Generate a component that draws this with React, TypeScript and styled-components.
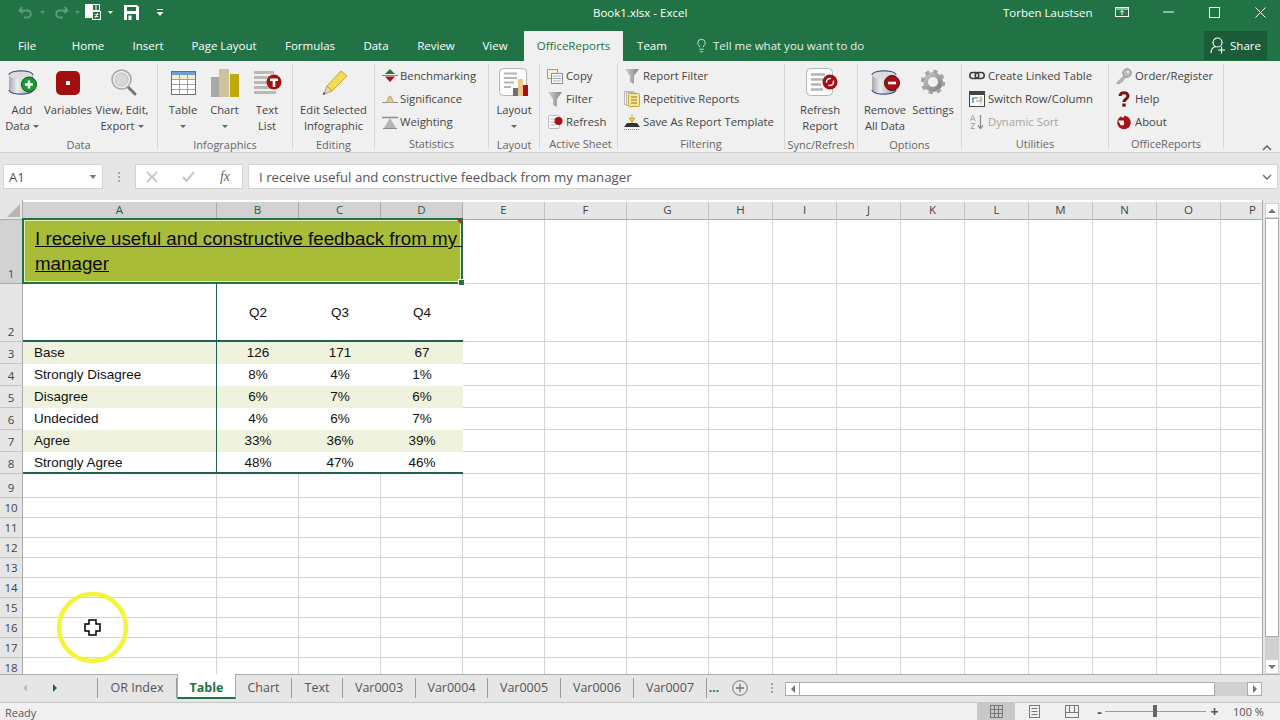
import React from 'react';
import styled, { createGlobalStyle } from 'styled-components';
import { Lightbulb } from 'lucide-react';

const UI = '"Open Sans", "Noto Sans", sans-serif';
const GREEN = '#217346';
const LINE = '#1f6150';

const Global = createGlobalStyle`
  html, body { margin: 0; padding: 0; overflow: hidden; background: #fff; }
  #root { width: 1280px; height: 720px; }
  * { box-sizing: border-box; }
`;

const Page = styled.div`
  position: relative; width: 1280px; height: 720px; overflow: hidden;
  display: flex; flex-direction: column;
  font-family: ${UI}; font-size: 11.5px; color: #444; background: #f0f0f0;
`;

/* ---------- title bar ---------- */
const TitleBar = styled.div`
  height: 31px; background: ${GREEN}; color: #fff; display: flex; align-items: center; flex: none; padding-bottom: 7px;
`;
const QuickAccess = styled.div`
  width: 593px; flex: none; display: flex; align-items: center; padding-left: 18px;
`;
const QaGap = styled.span<{ $w: number }>` width: ${p => p.$w}px; flex: none; `;
const DocTitle = styled.div` width: 410px; flex: none; font-size: 11.5px; `;
const UserName = styled.div` width: 100px; flex: none; font-size: 11.5px; `;
const WinButton = styled.div<{ $w: number; $pr?: number }>`
  width: ${p => p.$w}px; flex: none; display: flex; justify-content: center; padding-right: ${p => p.$pr ?? 0}px;
`;

/* ---------- tabs ---------- */
const TabRow = styled.div`
  height: 30px; background: ${GREEN}; display: flex; align-items: stretch; flex: none; color: #fff;
`;
const RibbonTab = styled.div<{ $w: number; $active?: boolean }>`
  width: ${p => p.$w}px; flex: none; display: flex; align-items: center; justify-content: center;
  font-size: 11.5px; padding-bottom: 2px;
  background: ${p => (p.$active ? '#f0f0f0' : 'transparent')};
  color: ${p => (p.$active ? GREEN : '#fff')};
`;
const TellMe = styled.div`
  margin-left: 13px; width: 510px; flex: none; display: flex; align-items: center; gap: 4px; padding-bottom: 2px;
  font-size: 11.5px; color: #e4efe8;
`;
const ShareButton = styled.div`
  width: 63px; height: 29px; flex: none; background: #1a5c38; display: flex; align-items: center;
  justify-content: center; gap: 3px; font-size: 11.5px;
`;

/* ---------- ribbon ---------- */
const Ribbon = styled.div`
  position: relative; height: 92px; flex: none; background: #f0f0f0;
  border-bottom: 1px solid #d4d4d4; display: flex; align-items: flex-start;
`;
const Group = styled.div<{ $w: number }>`
  width: ${p => p.$w}px; height: 85px; margin-top: 3px; flex: none;
  border-right: 1px solid #d6d6d6; display: flex; flex-direction: column;
`;
const GroupBody = styled.div<{ $pad?: number }>`
  height: 70px; display: flex; padding-left: ${p => p.$pad ?? 0}px;
`;
const GroupLabel = styled.div<{ $shift?: number }>`
  height: 16px; margin-top: 3px; line-height: 16px; text-align: center; font-size: 11px; color: #666;
  white-space: nowrap; padding-left: ${p => p.$shift ?? 0}px;
`;
const LargeButton = styled.div<{ $w: number }>`
  width: ${p => p.$w}px; flex: none; display: flex; flex-direction: column; align-items: center;
`;
const IconSlot = styled.div`
  height: 38px; padding-top: 3px; display: flex; justify-content: center; flex: none;
`;
const BtnLine = styled.div`
  height: 16px; line-height: 16px; white-space: nowrap; font-size: 11.2px; color: #444;
  display: flex; align-items: center; justify-content: center; gap: 3px;
`;
const Caret = styled.span`
  display: inline-block; width: 0; height: 0; border-left: 3px solid transparent;
  border-right: 3px solid transparent; border-top: 3px solid #666; margin-top: 1px;
`;
const SmallColumn = styled.div`
  display: flex; flex-direction: column;
`;
const SmallRow = styled.div<{ $gap: number; $off?: boolean }>`
  height: 23px; display: flex; align-items: center; gap: ${p => p.$gap}px; white-space: nowrap;
  color: ${p => (p.$off ? '#a6a6a6' : '#444')}; font-size: 11.3px;
`;
const Collapse = styled.div`
  position: absolute; right: 6px; bottom: 3px; width: 12px; height: 10px;
`;

/* ---------- formula bar ---------- */
const FormulaBar = styled.div`
  height: 47px; flex: none; background: #e6e6e6; padding: 11px 2px 11px 3px; display: flex; align-items: stretch;
`;
const NameBox = styled.div`
  width: 100px; background: #fff; border: 1px solid #d4d4d4; display: flex; align-items: center;
  justify-content: space-between; padding: 0 5px 0 5px; font-size: 13px; color: #555;
`;
const Dots = styled.div`
  width: 32px; display: flex; flex-direction: column; gap: 2px; align-items: center; justify-content: center;
  & > i { width: 2px; height: 2px; background: #aaa; display: block; }
`;
const FxBox = styled.div`
  width: 108px; background: #fff; border: 1px solid #d4d4d4; display: flex; align-items: center;
  justify-content: space-between; padding: 0 12px 0 10px;
`;
const FxGlyph = styled.span`
  font-family: "Liberation Serif", serif; font-style: italic; font-size: 14px; color: #666;
`;
const FormulaInput = styled.div`
  flex: 1; margin-left: 5px; background: #fff; border: 1px solid #d4d4d4; display: flex; align-items: center;
  justify-content: space-between; padding: 0 5px 0 10px; font-size: 13.25px; color: #555;
`;

/* ---------- sheet ---------- */
const SheetRow = styled.div`
  height: 474px; flex: none; display: flex; background: #e6e6e6;
`;
const Grid = styled.div`
  width: 1263px; height: 474px; overflow: hidden; background: #fff; border-right: 1px solid #ababab;
  display: grid;
  grid-template-columns: 23px 194px 82px 82px 82px 82px 82px 82px repeat(8, 64px) 64px;
  grid-template-rows: 20px 64px 58px repeat(6, 22px) 24px repeat(9, 20px);
  font-family: "Liberation Sans", Arial, sans-serif; font-size: 13.5px; color: #111;
`;
const Corner = styled.div`
  background: #e6e6e6; border-right: 1px solid #ababab; border-bottom: 1px solid #ababab; position: relative;
  &::after {
    content: ''; position: absolute; right: 2px; bottom: 2px; width: 0; height: 0;
    border-left: 13px solid transparent; border-bottom: 13px solid #b4b4b4;
  }
`;
const ColHead = styled.div<{ $sel?: boolean }>`
  background: ${p => (p.$sel ? '#d2d2d2' : '#e6e6e6')};
  margin-top: 2px; padding-bottom: 3px;
  border-right: 1px solid ${p => (p.$sel ? '#ababab' : '#c4c4c4')};
  border-bottom: 1px solid ${p => (p.$sel ? GREEN : '#ababab')};
  color: ${p => (p.$sel ? '#22604a' : '#444')};
  font-family: ${UI}; font-size: 11.5px; display: flex; align-items: center; justify-content: center;
`;
const RowHead = styled.div<{ $sel?: boolean }>`
  background: ${p => (p.$sel ? '#d2d2d2' : '#e6e6e6')};
  border-right: 1px solid ${p => (p.$sel ? GREEN : '#ababab')};
  border-bottom: 1px solid ${p => (p.$sel ? '#ababab' : '#c4c4c4')};
  color: ${p => (p.$sel ? '#22604a' : '#444')};
  font-family: ${UI}; font-size: 11.5px; line-height: 14px; display: flex; align-items: flex-end; justify-content: center;
  padding-bottom: 2px;
`;
const Cell = styled.div`
  border-right: 1px solid #d4d4d4; border-bottom: 1px solid #d4d4d4;
`;
const TableCell = styled.div<{ $fill?: boolean; $divider?: boolean; $rule?: boolean; $left?: boolean }>`
  background: ${p => (p.$fill ? '#eff3dd' : '#fff')};
  border-right: ${p => (p.$divider ? `1px solid ${LINE}` : '0')};
  border-bottom: ${p => (p.$rule ? `2px solid ${LINE}` : '0')};
  display: flex; align-items: center;
  justify-content: ${p => (p.$left ? 'flex-start' : 'center')};
  padding-left: ${p => (p.$left ? '11px' : '0')};
  padding-bottom: ${p => (p.$rule ? '0' : '2px')};
  white-space: nowrap;
`;
const Merged = styled.div`
  grid-column: span 4; position: relative; z-index: 2;
  margin: -2px 0 0 -1px;
  background: #a9bc37; border: 2px solid ${GREEN}; box-shadow: inset 0 0 0 1px #e6edc4;
  padding: 6px 0 0 11px; font-size: 18.75px; line-height: 25px; color: #0a0a0a;
  text-decoration: underline; white-space: pre-wrap;
`;
const Handle = styled.i`
  position: absolute; right: -4px; bottom: -4px; width: 7px; height: 7px; background: ${GREEN};
  border: 1px solid #fff;
`;
const CommentMark = styled.i`
  position: absolute; right: 0; top: 0; width: 0; height: 0;
  border-left: 4px solid transparent; border-top: 4px solid #a33;
`;

/* vertical scroll */
const VScroll = styled.div`
  width: 17px; height: 474px; padding: 3px 0 0 2px; display: flex; flex-direction: column;
`;
const ScrollBtn = styled.div`
  height: 15px; width: 14px; background: #fff; border: 1px solid #d4d4d4; display: flex; align-items: center; justify-content: center; flex: none;
`;
const VThumb = styled.div`
  height: 419px; width: 14px; background: #fff; border: 1px solid #ababab; flex: none;
`;
const VTrack = styled.div` flex: 1; width: 14px; background: #d0d0d0; `;
const ArrowUp = styled.i`
  width: 0; height: 0; border-left: 4px solid transparent; border-right: 4px solid transparent; border-bottom: 4px solid #777;
`;
const ArrowDown = styled.i`
  width: 0; height: 0; border-left: 4px solid transparent; border-right: 4px solid transparent; border-top: 4px solid #777;
`;
const ArrowSide = styled.i<{ $dir: 'l' | 'r'; $c?: string }>`
  width: 0; height: 0; border-top: 4px solid transparent; border-bottom: 4px solid transparent;
  ${p => (p.$dir === 'l' ? `border-right: 4px solid ${p.$c ?? '#777'};` : `border-left: 4px solid ${p.$c ?? '#777'};`)}
`;

/* ---------- sheet tabs ---------- */
const TabBar = styled.div`
  height: 28px; flex: none; background: #e6e6e6; border-top: 1px solid #ababab; display: flex; align-items: flex-start;
`;
const TabNav = styled.div`
  width: 98px; height: 20px; margin-top: 3px; border-right: 1px solid #9c9c9c; display: flex; align-items: center;
  padding-left: 23px; gap: 26px; flex: none;
`;
const SheetTab = styled.div<{ $w: number; $active?: boolean }>`
  width: ${p => p.$w}px; font-size: 12.5px; display: flex; align-items: center; justify-content: center; flex: none;
  ${p => p.$active
    ? `height: 25px; margin-top: -1px; background: #fff; color: ${GREEN}; font-weight: 700;
       border-left: 1px solid #ababab; border-right: 1px solid #ababab; border-bottom: 2px solid ${GREEN}; padding-top: 3px;`
    : `height: 20px; margin-top: 3px; color: #555; border-right: 1px solid #9c9c9c; padding-bottom: 2px;`}
`;
const More = styled.div`
  width: 14px; flex: none; height: 20px; margin-top: 3px; color: ${GREEN}; font-weight: 700; font-size: 12px; line-height: 20px; text-align: center;
`;
const AddSheet = styled.div`
  width: 38px; flex: none; height: 20px; margin-top: 3px; display: flex; justify-content: center; align-items: center;
`;
const TabDots = styled(Dots)`
  width: 26px; flex: none; height: 20px; margin-top: 3px;
`;
const HScroll = styled.div`
  width: 477px; flex: none; height: 14px; margin-top: 7px; display: flex;
`;
const HBtn = styled.div`
  width: 15px; background: #fff; border: 1px solid #ababab; display: flex; align-items: center; justify-content: center; flex: none;
`;
const HThumb = styled.div`
  width: 416px; background: #fff; border: 1px solid #ababab; flex: none; margin-left: -1px;
`;
const HTrack = styled.div` flex: 1; background: #d0d0d0; `;

/* ---------- status bar ---------- */
const StatusBar = styled.div`
  height: 18px; flex: none; background: #f0f0f0; border-top: 1px solid #c6c6c6; display: flex; align-items: stretch;
  font-size: 11px; color: #555;
`;
const Ready = styled.div` width: 977px; flex: none; padding-left: 5px; line-height: 20px; `;
const ViewBtn = styled.div<{ $on?: boolean }>`
  width: 38px; flex: none; display: flex; align-items: center; justify-content: center; background: ${p => (p.$on ? '#c8c8c8' : 'transparent')};
`;
const ZoomWrap = styled.div`
  width: 189px; flex: none; display: flex; align-items: center; padding-left: 4px;
`;
const ZoomSign = styled.span`
  width: 9px; font-size: 14px; font-weight: 700; line-height: 14px; text-align: center; color: #555; flex: none;
`;
const Slider = styled.div`
  position: relative; width: 101px; height: 1px; background: #9c9c9c; margin: 0 4px 0 1px; flex: none;
`;
const SliderThumb = styled.i`
  position: absolute; left: 48px; top: -6px; width: 4px; height: 12px; background: #666;
`;
const ZoomText = styled.div` width: 59px; flex: none; text-align: center; line-height: 18px; white-space: nowrap; `;

/* ---------- presenter cursor overlay ---------- */
const Highlight = styled.svg`
  position: absolute; left: 52px; top: 587px; pointer-events: none; z-index: 5;
`;

/* ---------- icons ---------- */
const Svg32: React.FC<{ children: React.ReactNode }> = ({ children }) => (
  <svg width="32" height="32" viewBox="0 0 32 32" style={{ overflow: 'visible' }}>{children}</svg>
);
const Svg16: React.FC<{ children: React.ReactNode }> = ({ children }) => (
  <svg width="16" height="16" viewBox="0 0 16 16" style={{ flex: 'none', overflow: 'visible' }}>{children}</svg>
);

const Defs = () => (
  <svg width="0" height="0" style={{ position: 'absolute' }}>
    <defs>
      <linearGradient id="cyl" x1="0" x2="1" y1="0" y2="0">
        <stop offset="0" stopColor="#a8a8ac" /><stop offset=".35" stopColor="#eeeeee" /><stop offset="1" stopColor="#8f8f94" />
      </linearGradient>
      <linearGradient id="fun" x1="0" x2="1" y1="0" y2="0">
        <stop offset="0" stopColor="#d0d0d0" /><stop offset="1" stopColor="#848484" />
      </linearGradient>
      <linearGradient id="gear" x1="0" x2="1" y1="0" y2="1">
        <stop offset="0" stopColor="#c4c4c4" /><stop offset="1" stopColor="#808080" />
      </linearGradient>
    </defs>
  </svg>
);

const Cylinder: React.FC<{ children?: React.ReactNode }> = ({ children }) => (
  <Svg32>
    <path d="M3 8v15c0 5.500 24 5.500 24 0V8z" fill="url(#cyl)" />
    <ellipse cx="15" cy="8" rx="12" ry="4.200" fill="#dcdcdc" />
    <path d="M3 8c0-5.500 24-5.500 24 0" fill="none" stroke="#1c2c86" strokeWidth="1" />
    <path d="M3 23c0 5.500 24 5.500 24 0" fill="none" stroke="#1c2c86" strokeWidth="1" />
    {children}
  </Svg32>
);
const AddDataIcon = () => (
  <Cylinder>
    <circle cx="23" cy="17.500" r="7.500" fill="#1a9a2e" stroke="#0a5a1c" />
    <path d="M23 13.500v8M19 17.500h8" stroke="#fff" strokeWidth="2.400" />
  </Cylinder>
);
const RemoveIcon = () => (
  <Cylinder>
    <circle cx="23" cy="16" r="7.500" fill="#a80f14" stroke="#5a0a0a" />
    <path d="M19 16h8" stroke="#fff" strokeWidth="2.600" />
  </Cylinder>
);
const VariablesIcon = () => (
  <Svg32>
    <rect x="4" y="4" width="24" height="24" rx="5" fill="#a30d0d" />
    <rect x="14" y="14" width="4" height="4" fill="#fff" />
  </Svg32>
);
const MagnifierIcon = () => (
  <Svg32>
    <path d="M21 19l8 8" stroke="#777" strokeWidth="3" strokeLinecap="round" />
    <circle cx="15.500" cy="12.500" r="9.500" fill="#ececec" stroke="#a6a6a6" strokeWidth="1.500" />
    <circle cx="15.500" cy="12.500" r="6.500" fill="#d8d8d8" stroke="#c4c4c4" />
  </Svg32>
);
const TableIcon = () => (
  <Svg32>
    <rect x="4.500" y="4.500" width="24" height="23" fill="#fff" stroke="#6e6e6e" />
    <rect x="5" y="5" width="23" height="3" fill="#6f9fd2" />
    <rect x="5" y="8" width="23" height="4" fill="#f4eccb" />
    <path d="M5 12.500h23M5 17.500h23M5 22.500h23M12.500 8v19M20.500 8v19" stroke="#9aa4ae" strokeWidth="1" />
  </Svg32>
);
const ChartIcon = () => (
  <Svg32>
    <rect x="2" y="10" width="8" height="20" fill="#a8a8a8" />
    <rect x="10" y="2" width="10" height="28" fill="#cfc39b" />
    <rect x="21" y="7" width="9" height="23" fill="#bcab0a" />
  </Svg32>
);
const TextListIcon = () => (
  <Svg32>
    <path d="M3 5.500h20M3 10.500h16M3 15.500h14M3 20.500h18M3 25.500h22" stroke="#b9b9b9" strokeWidth="3" />
    <circle cx="23" cy="15" r="7.500" fill="#a50f0f" />
    <path d="M19 11.500h8v2.500h-2.700v6h-2.600v-6H19z" fill="#fff" />
  </Svg32>
);
const PencilIcon = () => (
  <Svg32>
    <path d="M9 19L23 4l6 5-15 15z" fill="#f4dc52" stroke="#c9a83a" />
    <path d="M9 19l5 5-8 3z" fill="#e8d9b0" stroke="#a59a7c" />
    <path d="M5.500 25l-.800 3 3-1z" fill="#555" />
  </Svg32>
);
const LayoutIcon = () => (
  <Svg32>
    <rect x="1.500" y="1.500" width="27" height="27" rx="4" fill="#fbfbfb" stroke="#b5b5b5" />
    <path d="M6 6.500h13M6 11h13M6 15.500h10M6 20h7" stroke="#b5b5b5" strokeWidth="2" />
    <rect x="15" y="21" width="5" height="8" fill="#6f6f6f" />
    <rect x="20" y="12" width="5" height="17" fill="#ecc88c" />
    <rect x="25" y="18" width="5" height="11" fill="#b00d0d" />
  </Svg32>
);
const RefreshReportIcon = () => (
  <Svg32>
    <rect x="2.500" y="1.500" width="26" height="27" rx="4" fill="#fbfbfb" stroke="#b5b5b5" />
    <path d="M7 7.500h14M7 12.500h12M7 17.500h10M7 22.500h12" stroke="#b5b5b5" strokeWidth="2.500" />
    <circle cx="26" cy="15" r="7.500" fill="#a30d14" />
    <circle cx="26" cy="15" r="3.500" fill="none" stroke="#fff" strokeWidth="1.500" strokeDasharray="7 3" />
  </Svg32>
);
const GearIcon = () => (
  <Svg32>
    <circle cx="16" cy="15" r="7.500" fill="none" stroke="url(#gear)" strokeWidth="5" />
    <circle cx="16" cy="15" r="10.500" fill="none" stroke="#a4a4a4" strokeWidth="3.500" strokeDasharray="4.200 4.050" />
  </Svg32>
);
const BenchIcon = () => (
  <Svg16>
    <path d="M8 1l5 5H3z" fill="#1f7a34" /><path d="M0 7h16v1H0z" fill="#888" /><path d="M3 8.500h10L8 14z" fill="#a81a1a" />
  </Svg16>
);
const SignifIcon = () => (
  <Svg16>
    <path d="M0 11.500h3.500C6 11.500 6 5 8 5s2 6.500 4.500 6.500H16z" fill="#eed06a" stroke="#8f8f8f" strokeWidth=".8" />
  </Svg16>
);
const WeightIcon = () => (
  <Svg16>
    <path d="M0 3.500h16" stroke="#8c8c8c" strokeWidth="1.500" /><path d="M8 4l6 10H2z" fill="#b5b5b5" /><path d="M1 14.500h14" stroke="#8c8c8c" />
  </Svg16>
);
const CopyIcon = () => (
  <Svg16>
    <rect x="0.500" y="1.500" width="10" height="9" fill="#f6efd8" stroke="#a49e88" />
    <rect x="4.500" y="5.500" width="11" height="10" fill="#fff" stroke="#8c8c8c" />
    <path d="M6 8h8M6 10.500h8M6 13h8" stroke="#9ab" />
  </Svg16>
);
const FunnelIcon = () => (
  <Svg16><path d="M1 1h14l-5 7v8l-4-2V8z" fill="url(#fun)" /></Svg16>
);
const RefreshSmallIcon = () => (
  <Svg16>
    <rect x="1.500" y="1.500" width="11" height="13" rx="1.500" fill="#fafafa" stroke="#bbb" />
    <path d="M3.500 5h6M3.500 8h5M3.500 11h6" stroke="#bbb" />
    <circle cx="11.500" cy="7" r="4" fill="#a81218" />
  </Svg16>
);
const RepetitiveIcon = () => (
  <Svg16>
    <rect x="0.500" y="0.500" width="9" height="13" fill="#f2f2f2" stroke="#bbb" />
    <rect x="2.500" y="1.500" width="9" height="13" fill="#f4eccb" stroke="#bbb" />
    <rect x="4.500" y="2.500" width="11" height="13" rx="1" fill="#fbe58a" stroke="#c7a63a" />
    <path d="M7 6h6M7 9h6M7 12h6" stroke="#8a7a3a" />
  </Svg16>
);
const TemplateIcon = () => (
  <Svg16>
    <path d="M8 0v5M5 4h6L8 9z" fill="#ecc94a" stroke="#c9a83a" strokeWidth=".8" />
    <path d="M0 13l3-4h10l3 4z" fill="#333" />
    <path d="M0 15.500h16" stroke="#888" strokeDasharray="1 1" />
  </Svg16>
);
const LinkIcon = () => (
  <Svg16>
    <rect x="0.800" y="4.500" width="9" height="6" rx="3" fill="none" stroke="#3c3c3c" strokeWidth="1.600" />
    <rect x="6.200" y="4.500" width="9" height="6" rx="3" fill="none" stroke="#3c3c3c" strokeWidth="1.600" />
  </Svg16>
);
const SwitchIcon = () => (
  <Svg16>
    <rect x="0.500" y="0.500" width="15" height="15" fill="#fff" stroke="#444" />
    <rect x="1" y="1" width="14" height="3" fill="#444" />
    <path d="M4 12V7h5" fill="none" stroke="#2a6fb8" strokeWidth="1.200" />
    <path d="M7 10h5V6" fill="none" stroke="#c68a1a" strokeWidth="1.200" />
    <path d="M11 5v9M13 5v9M2 9h2" stroke="#9cc" strokeWidth=".7" />
  </Svg16>
);
const SortIcon = () => (
  <Svg16>
    <path d="M1.500 7l2-5.500h.6l2 5.500M2.300 5.200h3M1.800 9.500h4l-4 5h4" fill="none" stroke="#a6a6a6" />
    <path d="M11.500 1v13M9 11.500l2.500 3 2.500-3" fill="none" stroke="#8a8a8a" strokeWidth="1.200" />
  </Svg16>
);
const KeyIcon = () => (
  <Svg16>
    <circle cx="11" cy="5" r="4.200" fill="#bcbcbc" stroke="#8f8f8f" />
    <path d="M8 8l-7 6.500v1h3l1-1.500 1.500-.5.500-1.500L9.500 10z" fill="#bcbcbc" stroke="#8f8f8f" strokeWidth=".7" />
    <circle cx="12" cy="4" r="1.200" fill="#f0f0f0" />
  </Svg16>
);
const HelpIcon = () => (
  <Svg16>
    <path d="M4 5c0-4.500 8-4.500 8 0 0 3-4 3-4 6" fill="none" stroke="#7a1414" strokeWidth="3" />
    <rect x="6.300" y="12.500" width="3.400" height="3.200" fill="#7a1414" />
  </Svg16>
);
const AboutIcon = () => (
  <Svg16>
    <circle cx="8" cy="8.500" r="6.800" fill="#a3141a" />
    <path d="M5.500 0.500h2.500v3H5.500zM2 6.500h6v4.500l-3 .5z" fill="#f0f0f0" />
  </Svg16>
);

const UndoIcon: React.FC<{ flip?: boolean }> = ({ flip }) => (
  <svg width="16" height="14" viewBox="0 0 16 14" style={{ transform: flip ? 'scaleX(-1)' : undefined, flex: 'none' }}>
    <path d="M4 2L1.500 5.500 5 8M2 5.500h7c5 0 5 7 0 7H6" fill="none" stroke="#5e9c7a" strokeWidth="1.800" />
  </svg>
);
const TinyCaret: React.FC<{ c: string; big?: boolean }> = ({ c, big }) => (
  <svg width={big ? 8 : 5} height={big ? 4 : 3} viewBox="0 0 5 3" style={{ flex: 'none' }}><path d="M0 0h5L2.500 3z" fill={c} /></svg>
);
const SheetQaIcon = () => (
  <svg width="16" height="16" viewBox="0 0 16 16" style={{ flex: 'none' }}>
    <path d="M0 0h7v14H0z" fill="#fff" />
    <path d="M7.500 .5h7v6h-7zM11 0v6" fill="none" stroke="#fff" />
    <rect x="7.500" y="7.500" width="8" height="8" fill={GREEN} stroke="#fff" />
    <path d="M9.500 10.500h4M9.500 12.500h4M12.500 9l-2 5" stroke="#fff" strokeWidth=".8" />
  </svg>
);
const SaveQaIcon = () => (
  <svg width="15" height="15" viewBox="0 0 15 15" style={{ flex: 'none' }}>
    <path d="M0 0h13l2 2v13H0z" fill="#fff" />
    <rect x="3" y="2" width="9" height="4" fill={GREEN} />
    <rect x="3" y="9" width="9" height="6" fill={GREEN} />
    <rect x="4.500" y="10.500" width="3" height="4.500" fill="#fff" />
  </svg>
);
const CustomizeQa = () => (
  <svg width="8" height="7" viewBox="0 0 8 7" style={{ flex: 'none' }}><path d="M1 .5h6" stroke="#fff" /><path d="M.5 3h7L4 7z" fill="#fff" /></svg>
);
const ShareIcon = () => (
  <svg width="17" height="17" viewBox="0 0 17 17" fill="none" stroke="#fff" strokeWidth="1.200">
    <circle cx="7.500" cy="5.500" r="4.500" />
    <path d="M1 16c0-4 2-6 5-6.500M8 13h7M11.500 9.500v7" />
  </svg>
);
const Cross = () => (
  <svg width="12" height="12" viewBox="0 0 12 12"><path d="M1 1l10 10M11 1L1 11" stroke="#c8c8c8" strokeWidth="1.800" /></svg>
);
const Check = () => (
  <svg width="13" height="11" viewBox="0 0 13 11"><path d="M1 6l3.500 4L12 1" fill="none" stroke="#c8c8c8" strokeWidth="2" /></svg>
);
const ChevronDown = () => (
  <svg width="10" height="6" viewBox="0 0 10 6"><path d="M1 1l4 4 4-4" fill="none" stroke="#777" strokeWidth="1.600" /></svg>
);

/* ---------- data ---------- */
const LETTERS = 'ABCDEFGHIJKLMNOP'.split('');
const TABLE_ROWS: [string, string, string, string][] = [
  ['Base', '126', '171', '67'],
  ['Strongly Disagree', '8%', '4%', '1%'],
  ['Disagree', '6%', '7%', '6%'],
  ['Undecided', '4%', '6%', '7%'],
  ['Agree', '33%', '36%', '39%'],
  ['Strongly Agree', '48%', '47%', '46%'],
];
const RIBBON_TABS: [string, number][] = [
  ['File', 54], ['Home', 68], ['Insert', 52], ['Page Layout', 100], ['Formulas', 72], ['Data', 60], ['Review', 60], ['View', 58],
];
const SHEETS: [string, number][] = [
  ['OR Index', 79], ['Table', 59], ['Chart', 56], ['Text', 51], ['Var0003', 73], ['Var0004', 72], ['Var0005', 73], ['Var0006', 73], ['Var0007', 73],
];

const Large: React.FC<{ w: number; icon: React.ReactNode; l1: string; l2?: string; caret?: boolean }> = ({ w, icon, l1, l2, caret }) => (
  <LargeButton $w={w}>
    <IconSlot>{icon}</IconSlot>
    <BtnLine>{l1}</BtnLine>
    <BtnLine>{l2}{caret && <Caret />}</BtnLine>
  </LargeButton>
);
const Small: React.FC<{ icon: React.ReactNode; gap: number; off?: boolean; children: React.ReactNode }> = ({ icon, gap, off, children }) => (
  <SmallRow $gap={gap} $off={off}>{icon}{children}</SmallRow>
);

export default function App() {
  return (
    <Page>
      <Global />
      <Defs />
      <TitleBar>
        <QuickAccess>
          <UndoIcon />
          <QaGap $w={6} />
          <TinyCaret c="#5e9c7a" />
          <QaGap $w={8} />
          <UndoIcon flip />
          <QaGap $w={6} />
          <TinyCaret c="#5e9c7a" />
          <QaGap $w={5} />
          <SheetQaIcon />
          <QaGap $w={7} />
          <TinyCaret c="#fff" />
          <QaGap $w={11} />
          <SaveQaIcon />
          <QaGap $w={17} />
          <CustomizeQa />
        </QuickAccess>
        <DocTitle>Book1.xlsx - Excel</DocTitle>
        <UserName>Torben Laustsen</UserName>
        <WinButton $w={42} $pr={4}>
          <svg width="14" height="10" viewBox="0 0 14 10" fill="none" stroke="#fff"><rect x=".5" y=".5" width="13" height="9" /><path d="M1 2h12M7 8V3.500M5 5.500l2-2 2 2" /></svg>
        </WinButton>
        <WinButton $w={46}><svg width="11" height="2" viewBox="0 0 11 2"><path d="M0 1h11" stroke="#fff" /></svg></WinButton>
        <WinButton $w={46}><svg width="11" height="11" viewBox="0 0 11 11"><rect x=".5" y=".5" width="10" height="10" fill="none" stroke="#fff" /></svg></WinButton>
        <WinButton $w={46}><svg width="11" height="11" viewBox="0 0 11 11"><path d="M.5.500l10 10M10.500.500l-10 10" stroke="#fff" /></svg></WinButton>
      </TitleBar>

      <TabRow>
        {RIBBON_TABS.map(([t, w]) => <RibbonTab key={t} $w={w}>{t}</RibbonTab>)}
        <RibbonTab $w={99} $active>OfficeReports</RibbonTab>
        <RibbonTab $w={58}>Team</RibbonTab>
        <TellMe><Lightbulb size={15} strokeWidth={1.3} />Tell me what you want to do</TellMe>
        <ShareButton><ShareIcon />Share</ShareButton>
      </TabRow>

      <Ribbon>
        <Group $w={158}>
          <GroupBody $pad={4}>
            <Large w={36} icon={<AddDataIcon />} l1="Add" l2="Data" caret />
            <Large w={56} icon={<VariablesIcon />} l1="Variables" />
            <Large w={52} icon={<MagnifierIcon />} l1="View, Edit," l2="Export" caret />
          </GroupBody>
          <GroupLabel>Data</GroupLabel>
        </Group>
        <Group $w={135}>
          <GroupBody $pad={4}>
            <Large w={42} icon={<TableIcon />} l1="Table" caret />
            <Large w={41} icon={<ChartIcon />} l1="Chart" caret />
            <Large w={44} icon={<TextListIcon />} l1="Text" l2="List" />
          </GroupBody>
          <GroupLabel>Infographics</GroupLabel>
        </Group>
        <Group $w={82}>
          <GroupBody>
            <Large w={81} icon={<PencilIcon />} l1="Edit Selected" l2="Infographic" />
          </GroupBody>
          <GroupLabel>Editing</GroupLabel>
        </Group>
        <Group $w={114}>
          <GroupBody $pad={7}>
            <SmallColumn>
              <Small gap={2} icon={<BenchIcon />}>Benchmarking</Small>
              <Small gap={2} icon={<SignifIcon />}>Significance</Small>
              <Small gap={2} icon={<WeightIcon />}>Weighting</Small>
            </SmallColumn>
          </GroupBody>
          <GroupLabel>Statistics</GroupLabel>
        </Group>
        <Group $w={51}>
          <GroupBody>
            <Large w={50} icon={<LayoutIcon />} l1="Layout" caret />
          </GroupBody>
          <GroupLabel>Layout</GroupLabel>
        </Group>
        <Group $w={78}>
          <GroupBody $pad={7}>
            <SmallColumn>
              <Small gap={3} icon={<CopyIcon />}>Copy</Small>
              <Small gap={3} icon={<FunnelIcon />}>Filter</Small>
              <Small gap={3} icon={<RefreshSmallIcon />}>Refresh</Small>
            </SmallColumn>
          </GroupBody>
          <GroupLabel $shift={4}>Active Sheet</GroupLabel>
        </Group>
        <Group $w={167}>
          <GroupBody $pad={6}>
            <SmallColumn>
              <Small gap={3} icon={<FunnelIcon />}>Report Filter</Small>
              <Small gap={3} icon={<RepetitiveIcon />}>Repetitive Reports</Small>
              <Small gap={3} icon={<TemplateIcon />}>Save As Report Template</Small>
            </SmallColumn>
          </GroupBody>
          <GroupLabel>Filtering</GroupLabel>
        </Group>
        <Group $w={73}>
          <GroupBody>
            <Large w={70} icon={<RefreshReportIcon />} l1="Refresh" l2="Report" />
          </GroupBody>
          <GroupLabel>Sync/Refresh</GroupLabel>
        </Group>
        <Group $w={104}>
          <GroupBody $pad={5}>
            <Large w={44} icon={<RemoveIcon />} l1="Remove" l2="All Data" />
            <Large w={52} icon={<GearIcon />} l1="Settings" />
          </GroupBody>
          <GroupLabel>Options</GroupLabel>
        </Group>
        <Group $w={147}>
          <GroupBody $pad={7}>
            <SmallColumn>
              <Small gap={3} icon={<LinkIcon />}>Create Linked Table</Small>
              <Small gap={3} icon={<SwitchIcon />}>Switch Row/Column</Small>
              <Small gap={3} off icon={<SortIcon />}>Dynamic Sort</Small>
            </SmallColumn>
          </GroupBody>
          <GroupLabel>Utilities</GroupLabel>
        </Group>
        <Group $w={115}>
          <GroupBody $pad={7}>
            <SmallColumn>
              <Small gap={3} icon={<KeyIcon />}>Order/Register</Small>
              <Small gap={3} icon={<HelpIcon />}>Help</Small>
              <Small gap={3} icon={<AboutIcon />}>About</Small>
            </SmallColumn>
          </GroupBody>
          <GroupLabel>OfficeReports</GroupLabel>
        </Group>
        <Collapse>
          <svg width="10" height="6" viewBox="0 0 10 6"><path d="M1 5l4-4 4 4" fill="none" stroke="#666" strokeWidth="1.500" /></svg>
        </Collapse>
      </Ribbon>

      <FormulaBar>
        <NameBox>A1<TinyCaret c="#777" big /></NameBox>
        <Dots><i /><i /><i /></Dots>
        <FxBox><Cross /><Check /><FxGlyph>fx</FxGlyph></FxBox>
        <FormulaInput>I receive useful and constructive feedback from my manager<ChevronDown /></FormulaInput>
      </FormulaBar>

      <SheetRow>
        <Grid>
          <Corner />
          {LETTERS.map((l, i) => <ColHead key={l} $sel={i < 4}>{l}</ColHead>)}

          <RowHead $sel>1</RowHead>
          <Merged>
            I receive useful and constructive feedback from my manager
            <CommentMark />
            <Handle />
          </Merged>
          {LETTERS.slice(4).map(l => <Cell key={l} />)}

          <RowHead>2</RowHead>
          <TableCell $divider $rule />
          <TableCell $rule>Q2</TableCell>
          <TableCell $rule>Q3</TableCell>
          <TableCell $rule>Q4</TableCell>
          {LETTERS.slice(4).map(l => <Cell key={l} />)}

          {TABLE_ROWS.map((r, i) => (
            <React.Fragment key={r[0]}>
              <RowHead>{i + 3}</RowHead>
              <TableCell $left $divider $fill={i % 2 === 0} $rule={i === 5}>{r[0]}</TableCell>
              <TableCell $fill={i % 2 === 0} $rule={i === 5}>{r[1]}</TableCell>
              <TableCell $fill={i % 2 === 0} $rule={i === 5}>{r[2]}</TableCell>
              <TableCell $fill={i % 2 === 0} $rule={i === 5}>{r[3]}</TableCell>
              {LETTERS.slice(4).map(l => <Cell key={l} />)}
            </React.Fragment>
          ))}

          {Array.from({ length: 10 }, (_, i) => i + 9).map(n => (
            <React.Fragment key={n}>
              <RowHead>{n}</RowHead>
              {LETTERS.map(l => <Cell key={l} />)}
            </React.Fragment>
          ))}
        </Grid>
        <VScroll>
          <ScrollBtn><ArrowUp /></ScrollBtn>
          <VThumb />
          <VTrack />
          <ScrollBtn><ArrowDown /></ScrollBtn>
        </VScroll>
      </SheetRow>

      <TabBar>
        <TabNav>
          <ArrowSide $dir="l" $c="#bdbdbd" />
          <ArrowSide $dir="r" $c="#1f6150" />
        </TabNav>
        {SHEETS.map(([t, w]) => <SheetTab key={t} $w={w} $active={t === 'Table'}>{t}</SheetTab>)}
        <More>...</More>
        <AddSheet>
          <svg width="16" height="16" viewBox="0 0 16 16" fill="none" stroke="#777"><circle cx="8" cy="8" r="7.300" /><path d="M8 4v8M4 8h8" strokeWidth="1.300" /></svg>
        </AddSheet>
        <TabDots><i /><i /><i /></TabDots>
        <HScroll>
          <HBtn><ArrowSide $dir="l" /></HBtn>
          <HThumb />
          <HTrack />
          <HBtn><ArrowSide $dir="r" /></HBtn>
        </HScroll>
      </TabBar>

      <StatusBar>
        <Ready>Ready</Ready>
        <ViewBtn $on>
          <svg width="13" height="13" viewBox="0 0 13 13" fill="none" stroke="#777"><rect x=".5" y=".5" width="12" height="12" /><path d="M4.500 0v13M8.500 0v13M0 4.500h13M0 8.500h13" /></svg>
        </ViewBtn>
        <ViewBtn>
          <svg width="13" height="13" viewBox="0 0 13 13" fill="none" stroke="#777"><rect x="1.500" y=".5" width="10" height="12" /><path d="M3.500 3.500h6M3.500 6.500h6M3.500 9.500h6" /></svg>
        </ViewBtn>
        <ViewBtn>
          <svg width="14" height="13" viewBox="0 0 14 13" fill="none" stroke="#777"><rect x=".5" y=".5" width="13" height="12" /><path d="M.5 7.500h13M4.500 0v7.500M9.500 0v7.500" /></svg>
        </ViewBtn>
        <ZoomWrap>
          <ZoomSign>-</ZoomSign>
          <Slider><SliderThumb /></Slider>
          <ZoomSign>+</ZoomSign>
          <ZoomText>100 %</ZoomText>
        </ZoomWrap>
      </StatusBar>

      <Highlight width="80" height="80" viewBox="0 0 80 80">
        <circle cx="40.500" cy="40.500" r="33.500" fill="none" stroke="#f4f43c" strokeWidth="4.500" />
        <path d="M37 33h7v4h4v7h-4v4h-7v-4h-4v-7h4z" fill="#fff" stroke="#000" strokeWidth="1.500" />
      </Highlight>
    </Page>
  );
}
